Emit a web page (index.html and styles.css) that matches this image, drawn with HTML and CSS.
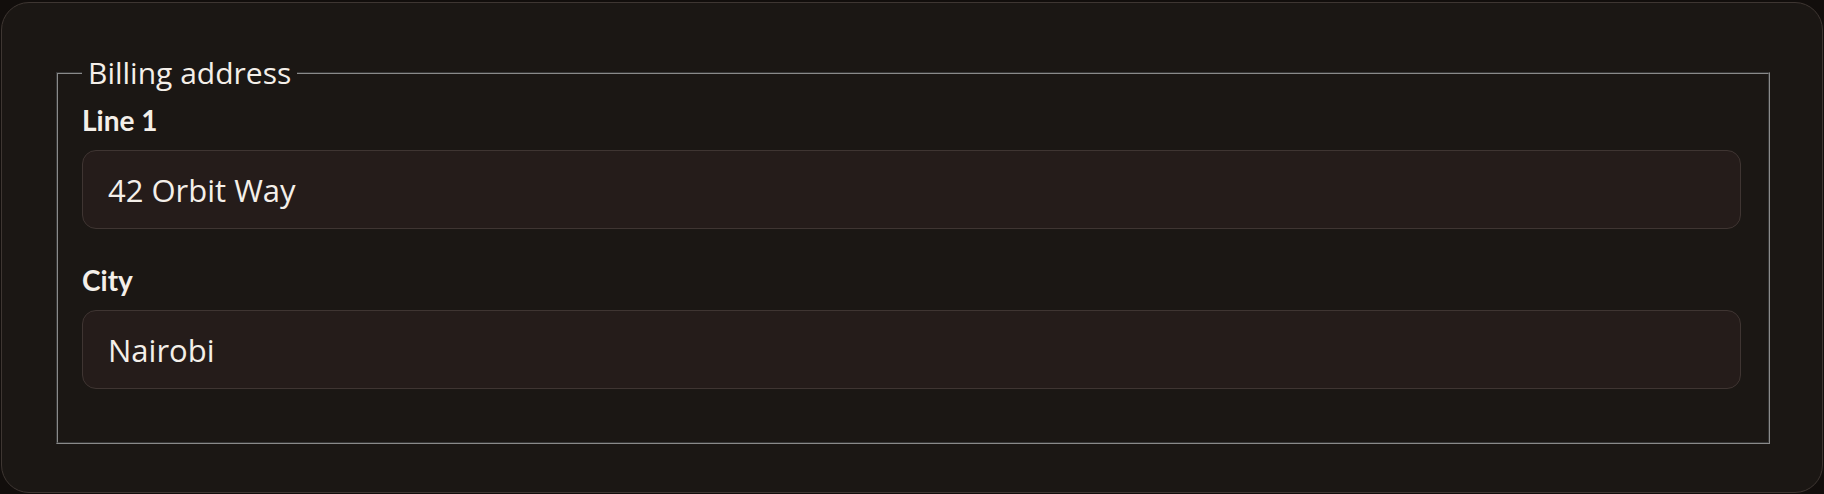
FILE: index.html
```html
<!DOCTYPE html>
<html lang="en">
<head>
<meta charset="utf-8">
<title>Billing address</title>
<link rel="stylesheet" href="styles.css">
</head>
<body>
<div class="page">
  <form class="card">
    <fieldset class="group">
      <legend class="group-title">Billing address</legend>
      <div class="field">
        <label class="field-label" for="line1">Line 1</label>
        <input class="field-input" id="line1" type="text" value="42 Orbit Way">
      </div>
      <div class="field">
        <label class="field-label" for="city">City</label>
        <input class="field-input" id="city" type="text" value="Nairobi">
      </div>
    </fieldset>
  </form>
</div>
</body>
</html>
```
FILE: styles.css
```css
html, body {
  margin: 0;
  padding: 0;
  background: #120e0c;
}

.page {
  padding: 2px 1px 1px 1px;
}

.card {
  background: #1b1714;
  border: 1px solid #3e3632;
  border-radius: 28px;
  padding: 52px 52px 48px 54px;
  font-family: "Open Sans", "Noto Sans", sans-serif;
  color: #f4efe9;
}

.group {
  margin: 0;
  padding: 12px 27px 53px 24px;
  border: 2px groove #8a8a8a;
  display: flex;
  flex-direction: column;
  gap: 34px;
}

.group-title {
  padding: 0 6px;
  font-size: 30px;
  line-height: 36px;
  font-weight: 400;
  color: #f4efe9;
}

.field {
  display: flex;
  flex-direction: column;
  gap: 13px;
}

.field-label {
  font-family: Lato, "Open Sans", sans-serif;
  font-weight: 700;
  font-size: 28px;
  line-height: 34px;
  color: #f4efe9;
}

.field-input {
  display: block;
  width: 100%;
  box-sizing: border-box;
  height: 79px;
  margin: 0;
  padding: 0 25px;
  background: #251c1a;
  border: 1px solid #3f3532;
  border-radius: 14px;
  font-family: "Open Sans", "Noto Sans", sans-serif;
  font-size: 31px;
  color: #f4efe9;
  outline: none;
}
```
